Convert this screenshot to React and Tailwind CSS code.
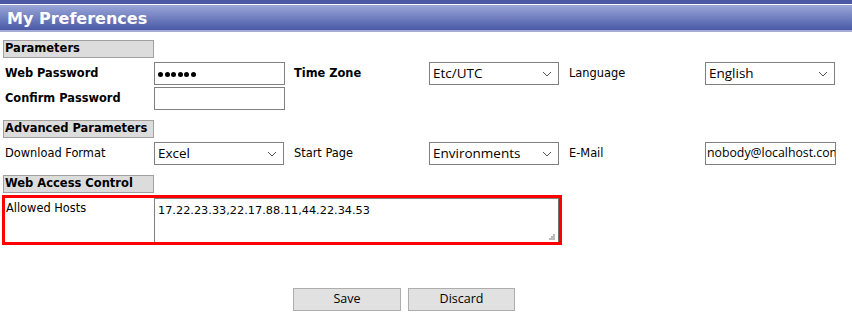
import React from 'react';

const Chevron = () => (
    <svg width="10" height="6" viewBox="0 0 10 6" className="shrink-0">
        <path d="M1 1 L5 5 L9 1" fill="none" stroke="#555" strokeWidth="1" />
    </svg>
);

const SectionTitle = ({ children }) => (
    <div className="w-[151px] h-[18px] bg-[#dcdcdc] border border-[#a0a0a0] pl-[1px] flex items-center whitespace-nowrap font-bold text-[11.5px] text-black leading-none">
        {children}
    </div>
);

const TextBox = ({ children }) => (
    <div className="w-[131px] h-[23px] border border-[#808080] bg-white flex items-center pl-[1px] overflow-hidden whitespace-nowrap font-['Open_Sans'] text-[12.3px] text-black">
        {children}
    </div>
);

const SelectBox = ({ value }) => (
    <div className="w-[130px] h-[23px] border border-[#808080] bg-white flex items-center justify-between pl-[3px] pr-[6px] font-['Open_Sans'] text-[13.5px] text-black">
        <span>{value}</span>
        <Chevron />
    </div>
);

const Label = ({ children, bold, w }) => (
    <div className={`${w} pl-[2px] pt-[3px] self-start whitespace-nowrap ${bold ? 'font-bold' : ''} text-[11.4px] text-black`}>{children}</div>
);

const Dots = () => (
    <div className="flex gap-[1.6px] pl-[2px] pt-[1px]">
        {[0, 1, 2, 3, 4, 5].map((i) => (
            <span key={i} className="w-[5px] h-[5px] rounded-full bg-black"></span>
        ))}
    </div>
);

const App = () => {
    return (
        <div className="w-[852px] h-[328px] bg-white font-['DejaVu_Sans','Verdana',sans-serif] text-[12px] overflow-hidden">
            {/* Title bar */}
            <div className="h-[4px] bg-[#4a58a6]"></div>
            <div className="h-[1px] bg-white"></div>
            <div className="h-[25px] bg-gradient-to-b from-[#9ba6d7] to-[#4b5aa7] flex items-center pl-[7px] pt-[2px] text-white font-bold text-[16px]">
                My Preferences
            </div>
            <div className="h-[2px] bg-[#a4acd6]"></div>

            <div className="pl-[3px] pt-[8px]">
                <SectionTitle>Parameters</SectionTitle>
                <div className="flex items-start mt-[4px] h-[23px]">
                    <Label bold w="w-[151px]">Web Password</Label>
                    <TextBox>
                        <Dots />
                    </TextBox>
                    <div className="w-[7px]"></div>
                    <Label bold w="w-[137px]">Time Zone</Label>
                    <SelectBox value="Etc/UTC" />
                    <div className="w-[8px]"></div>
                    <Label w="w-[138px]">Language</Label>
                    <SelectBox value="English" />
                </div>
                <div className="flex items-start mt-[2px] h-[23px]">
                    <Label bold w="w-[151px]">Confirm Password</Label>
                    <TextBox></TextBox>
                </div>

                <div className="mt-[10px]">
                    <SectionTitle>Advanced Parameters</SectionTitle>
                </div>
                <div className="flex items-start mt-[4px] h-[23px]">
                    <Label w="w-[151px]">Download Format</Label>
                    <SelectBox value="Excel" />
                    <div className="w-[8px]"></div>
                    <Label w="w-[137px]">Start Page</Label>
                    <SelectBox value="Environments" />
                    <div className="w-[8px]"></div>
                    <Label w="w-[138px]">E-Mail</Label>
                    <TextBox>nobody@localhost.com</TextBox>
                </div>

                <div className="mt-[10px]">
                    <SectionTitle>Web Access Control</SectionTitle>
                </div>
                <div className="ml-[-1px] mt-[2px] w-[560px] h-[50px] border-[3px] border-[#ff0000] flex">
                    <div className="w-[149px] pl-[1px] pt-[2px] text-[11.4px] text-black">Allowed Hosts</div>
                    <div className="relative w-[405px] h-[44px] border-t border-l border-[#808080] border-r border-r-[#6f6f6f] bg-white pl-[3px] pt-[4px] text-[11.3px] text-black">
                        17.22.23.33,22.17.88.11,44.22.34.53
                        <svg width="7" height="7" viewBox="0 0 7 7" className="absolute right-[2px] bottom-[1px]">
                            <rect x="4" y="0" width="2" height="2" fill="#bdbdbd" />
                            <rect x="2" y="2" width="2" height="2" fill="#bdbdbd" />
                            <rect x="4" y="2" width="2" height="2" fill="#bdbdbd" />
                            <rect x="0" y="4" width="2" height="2" fill="#bdbdbd" />
                            <rect x="2" y="4" width="2" height="2" fill="#bdbdbd" />
                            <rect x="4" y="4" width="2" height="2" fill="#bdbdbd" />
                        </svg>
                    </div>
                </div>
            </div>

            {/* Buttons */}
            <div className="flex mt-[43px] pl-[293px] gap-[7px]">
                <button className="w-[108px] h-[23px] bg-[#e1e1e1] border border-[#adadad] font-['Open_Sans'] text-[12.5px] text-black">Save</button>
                <button className="w-[107px] h-[23px] bg-[#e1e1e1] border border-[#adadad] font-['Open_Sans'] text-[12.5px] text-black">Discard</button>
            </div>
        </div>
    );
};

export default App;
